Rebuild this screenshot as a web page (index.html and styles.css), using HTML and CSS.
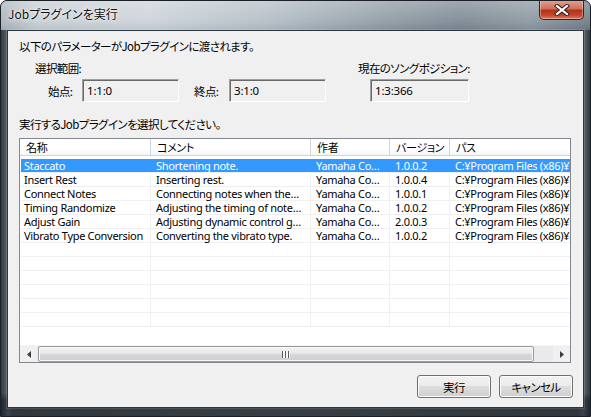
FILE: index.html
```html
<!DOCTYPE html>
<html lang="ja">
<head>
<meta charset="utf-8">
<title>Jobプラグインを実行</title>
<link rel="stylesheet" href="styles.css">
</head>
<body>
<div class="window">
  <div class="titlebar">
    <span class="title">Jobプラグインを実行</span>
    <span class="close-btn">
      <svg width="16" height="12" viewBox="0 0 16 12"><path d="M3 2 L13 10 M13 2 L3 10" stroke="#3a2020" stroke-width="4.2" stroke-linecap="square"/><path d="M3 2 L13 10 M13 2 L3 10" stroke="#fff" stroke-width="2.2" stroke-linecap="square"/></svg>
    </span>
  </div>
  <div class="frame-body">
    <div class="client">
      <p class="intro">以下のパラメーターがJobプラグインに渡されます。</p>
      <div class="params">
        <div class="group group-sel">
          <div class="group-label">選択範囲:</div>
          <div class="fields">
            <span class="field-label">始点:</span>
            <span class="textbox">1:1:0</span>
            <span class="field-label field-end">終点:</span>
            <span class="textbox">3:1:0</span>
          </div>
        </div>
        <div class="group group-pos">
          <div class="group-label">現在のソングポジション:</div>
          <div class="fields fields-pos">
            <span class="textbox textbox-pos">1:3:366</span>
          </div>
        </div>
      </div>
      <p class="prompt">実行するJobプラグインを選択してください。</p>
      <div class="listview">
        <div class="lv-inner">
          <div class="lv-row lv-header">
            <span class="c c1">名称</span><span class="c c2">コメント</span><span class="c c3">作者</span><span class="c c4">バージョン</span><span class="c c5">パス</span>
          </div>
          <div class="lv-body">
            <div class="lv-row sel"><span class="c c1">Staccato</span><span class="c c2">Shortening note.</span><span class="c c3">Yamaha Co…</span><span class="c c4">1.0.0.2</span><span class="c c5">C:¥Program Files (x86)¥</span></div>
            <div class="lv-row"><span class="c c1">Insert Rest</span><span class="c c2">Inserting rest.</span><span class="c c3">Yamaha Co…</span><span class="c c4">1.0.0.4</span><span class="c c5">C:¥Program Files (x86)¥</span></div>
            <div class="lv-row"><span class="c c1">Connect Notes</span><span class="c c2">Connecting notes when the…</span><span class="c c3">Yamaha Co…</span><span class="c c4">1.0.0.1</span><span class="c c5">C:¥Program Files (x86)¥</span></div>
            <div class="lv-row"><span class="c c1">Timing Randomize</span><span class="c c2">Adjusting the timing of note…</span><span class="c c3">Yamaha Co…</span><span class="c c4">1.0.0.2</span><span class="c c5">C:¥Program Files (x86)¥</span></div>
            <div class="lv-row"><span class="c c1">Adjust Gain</span><span class="c c2">Adjusting dynamic control g…</span><span class="c c3">Yamaha Co…</span><span class="c c4">2.0.0.3</span><span class="c c5">C:¥Program Files (x86)¥</span></div>
            <div class="lv-row"><span class="c c1">Vibrato Type Conversion</span><span class="c c2">Converting the vibrato type.</span><span class="c c3">Yamaha Co…</span><span class="c c4">1.0.0.2</span><span class="c c5">C:¥Program Files (x86)¥</span></div>
            <div class="lv-row"><span class="c c1"></span><span class="c c2"></span><span class="c c3"></span><span class="c c4"></span><span class="c c5"></span></div>
            <div class="lv-row"><span class="c c1"></span><span class="c c2"></span><span class="c c3"></span><span class="c c4"></span><span class="c c5"></span></div>
            <div class="lv-row"><span class="c c1"></span><span class="c c2"></span><span class="c c3"></span><span class="c c4"></span><span class="c c5"></span></div>
            <div class="lv-row"><span class="c c1"></span><span class="c c2"></span><span class="c c3"></span><span class="c c4"></span><span class="c c5"></span></div>
            <div class="lv-row"><span class="c c1"></span><span class="c c2"></span><span class="c c3"></span><span class="c c4"></span><span class="c c5"></span></div>
            <div class="lv-row"><span class="c c1"></span><span class="c c2"></span><span class="c c3"></span><span class="c c4"></span><span class="c c5"></span></div>
          </div>
        </div>
        <div class="hscroll">
          <span class="sb-btn"><svg width="4" height="7" viewBox="0 0 4 7"><path d="M4 0 L0 3.5 L4 7 Z" fill="#3c3c3c"/></svg></span>
          <span class="sb-track">
            <span class="sb-thumb"><span class="grip"></span></span>
          </span>
          <span class="sb-btn"><svg width="4" height="7" viewBox="0 0 4 7"><path d="M0 0 L4 3.5 L0 7 Z" fill="#3c3c3c"/></svg></span>
        </div>
      </div>
      <div class="buttons">
        <button class="btn">実行</button>
        <button class="btn">キャンセル</button>
      </div>
    </div>
  </div>
</div>
</body>
</html>
```

FILE: styles.css
```css
* { box-sizing: border-box; }
html, body { margin: 0; padding: 0; background: #ffffff; }
body {
  width: 591px;
  height: 417px;
  overflow: hidden;
  font-family: "Noto Sans CJK JP", sans-serif;
  font-size: 12px;
  color: #000;
}
.window {
  width: 591px;
  height: 417px;
  border: 1px solid #1a2026;
  border-radius: 7px 7px 0 0;
  background: #3a4751;
  display: flex;
  flex-direction: column;
  overflow: hidden;
}
.titlebar {
  height: 29px;
  flex: none;
  display: flex;
  align-items: flex-start;
  padding-left: 7px;
  background:
    linear-gradient(180deg, rgba(255,255,255,0.28) 0%, rgba(255,255,255,0.08) 70%, rgba(0,0,0,0.05) 100%),
    linear-gradient(90deg, #a9b3bb 0%, #c6cdd3 6%, #cbd2d8 25%, #b3bdc5 45%, #8e9aa4 65%, #7a8691 78%, #8a96a0 90%, #6f7b85 100%);
}
.title {
  margin-top: 5px;
  font-size: 12px;
  line-height: 16px;
  color: #111;
  font-feature-settings: "palt";
  text-shadow: 0 0 5px rgba(255,255,255,0.9), 0 0 2px rgba(255,255,255,0.8);
}
.close-btn {
  margin-left: auto;
  margin-right: 6px;
  margin-top: -1px;
  width: 45px;
  height: 20px;
  border: 1px solid #4a1b17;
  border-top: none;
  border-radius: 0 0 5px 5px;
  background: linear-gradient(180deg, #e6a494 0%, #d0715d 45%, #b3321a 55%, #c4472a 80%, #dc7c63 100%);
  box-shadow: inset 0 0 0 1px rgba(255,255,255,0.35);
  display: flex;
  align-items: center;
  justify-content: center;
}
.frame-body {
  flex: 1;
  display: flex;
  padding: 0 6px 8px 6px;
  background:
    linear-gradient(180deg, rgba(0,0,0,0) 94%, rgba(0,0,0,0.35) 96%),
    linear-gradient(90deg, #2f3b45 0%, #5c6873 1.2%, #4a5660 2%, #55616b 50%, #4a5660 98%, #5c6873 98.8%, #2f3b45 100%);
}
.client {
  flex: 1;
  background: #f0f0f0;
  border: 1px solid #2a3640;
  box-shadow: 0 0 0 1px rgba(255,255,255,0.12);
  padding: 0 10px 0 11px;
  display: flex;
  flex-direction: column;
}
p { margin: 0; }
.intro, .prompt, .group-label, .field-label, .lv-header, .btn {
  font-size: 11.5px;
  letter-spacing: -0.6px;
  font-feature-settings: "palt";
}
.intro {
  margin-top: 7px;
  line-height: 16px;
}
.params {
  display: flex;
  margin-top: 6px;
}
.group-label {
  line-height: 16px;
}
.group-sel { padding-left: 16px; }
.group-sel .fields { padding-left: 13px; }
.group-pos { margin-left: 32px; }
.fields {
  display: flex;
  align-items: center;
  margin-top: 3px;
}
.fields-pos { padding-left: 12px; }
.field-label {
  width: 34px;
  line-height: 16px;
}
.field-end { margin-left: 15px; width: 35px; }
.textbox {
  width: 97px;
  height: 23px;
  border: 1px solid;
  border-color: #a0a0a0 #ffffff #ffffff #a0a0a0;
  box-shadow: inset 1px 1px 0 #696969;
  background: #f0f0f0;
  font-family: "Noto Sans", sans-serif;
  font-size: 11.5px;
  letter-spacing: -0.2px;
  line-height: 19px;
  padding: 1px 0 0 4px;
}
.textbox-pos { width: 99px; }
.prompt {
  margin-top: 14px;
  line-height: 16px;
}
.listview {
  margin-top: 6px;
  width: 552px;
  height: 225px;
  border: 1px solid #828790;
  background: #fff;
  display: flex;
  flex-direction: column;
  overflow: hidden;
}
.lv-inner {
  flex: 1;
  overflow: hidden;
}
.lv-row {
  display: flex;
  height: 14px;
  white-space: nowrap;
  font-family: "Noto Sans", sans-serif;
  font-size: 11px;
  letter-spacing: -0.3px;
  line-height: 14px;
}
.lv-body { padding-top: 3px; padding-left: 1px; }
.lv-body .lv-row { border-bottom: 1px solid #f0f0f0; height: 14px; line-height: 13px; }
.lv-body .c { border-right: 1px solid #f0f0f0; }
.c {
  flex: none;
  overflow-x: clip;
  overflow-y: visible;
  padding-left: 5px;
}
.c1 { width: 130px; padding-left: 3px; }
.c2 { width: 160px; }
.c3 { width: 79px; }
.c4 { width: 60px; }
.c5 { width: 180px; }
.lv-header {
  height: 17px;
  background: linear-gradient(180deg, #ffffff 0%, #ffffff 60%, #f5f6f7 100%);
  border-bottom: 1px solid #d5d5d5;
  font-family: "Noto Sans CJK JP", sans-serif;
  line-height: 16px;
}
.lv-header .c { border-right: 1px solid #d5d5d5; padding-left: 6px; }
.lv-header .c1 { width: 131px; }
.lv-row.sel .c { background: #3399ff; color: #fff; border-right-color: #3399ff; }
.hscroll {
  height: 17px;
  flex: none;
  display: flex;
  background: #f0f0f0;
  border-top: 1px solid #f4f4f4;
}
.sb-btn {
  width: 17px;
  height: 16px;
  display: flex;
  align-items: center;
  justify-content: center;
  flex: none;
}
.sb-track {
  flex: 1;
  display: flex;
  padding: 0 19px 0 1px;
  background: #eaeaea;
}
.sb-thumb {
  flex: 1;
  height: 16px;
  border: 1px solid #9a9a9a;
  border-radius: 2px;
  background: linear-gradient(180deg, #f3f3f3 0%, #e8e8e8 45%, #d6d6d6 55%, #cfcfcf 100%);
  box-shadow: inset 0 0 0 1px #f8f8f8;
  display: flex;
  align-items: center;
  padding-left: 243px;
}
.grip {
  width: 8px;
  height: 7px;
  background: repeating-linear-gradient(90deg, #5a5a5a 0 1px, #f8f8f8 1px 3px);
}
.buttons {
  margin-top: 12px;
  display: flex;
  justify-content: flex-end;
  gap: 8px;
  padding-right: 0;
}
.btn {
  width: 74px;
  height: 23px;
  border: 1px solid #707070;
  border-radius: 3px;
  background: linear-gradient(180deg, #f2f2f2 0%, #ebebeb 49%, #dddddd 50%, #cfcfcf 100%);
  box-shadow: inset 0 0 0 1px #fcfcfc;
  font-family: "Noto Sans CJK JP", sans-serif;
  color: #000;
  padding: 0;
}
```
